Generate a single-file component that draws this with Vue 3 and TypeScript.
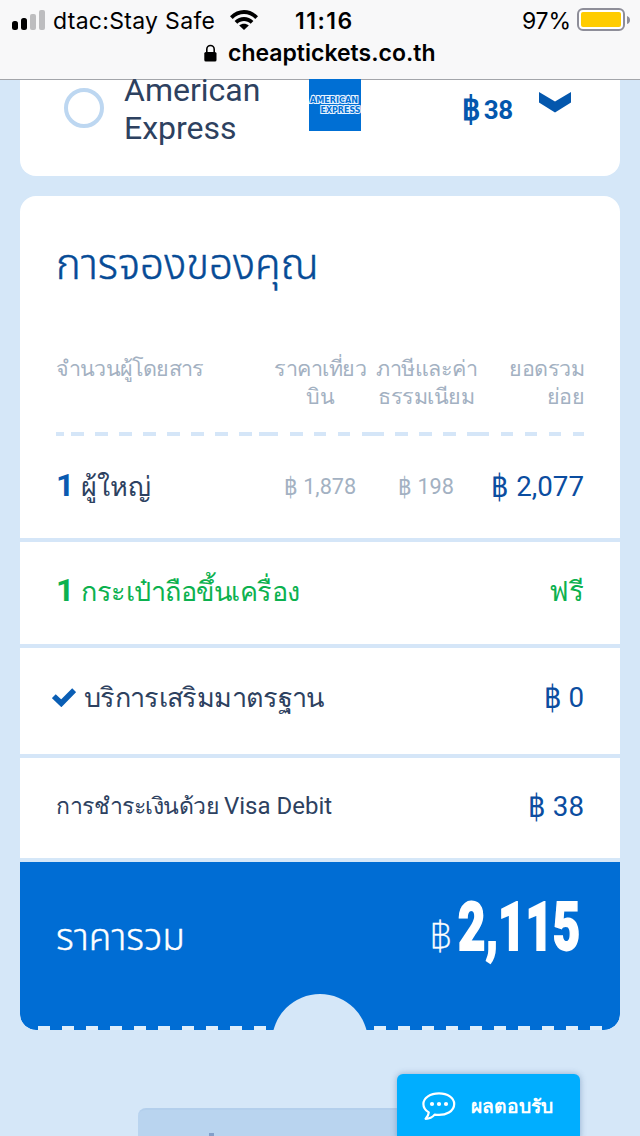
<script setup lang="ts">
interface Dash { x: number; w: number }

const headerDashes: Dash[] = [
  [56, 8], [71, 13], [95, 13], [119, 13], [143, 13], [167, 13], [191, 13], [215, 13], [239, 13],
  [259, 19], [290, 13], [314, 12], [338, 12], [362, 22], [395, 13], [419, 13], [443, 13],
  [467, 22], [501, 12], [525, 12], [549, 12], [573, 11],
].map(([x, w]) => ({ x: x - 56, w }))

const notches: number[] = [
  ...Array.from({ length: 10 }, (_, i) => 18 + i * 24),
  ...Array.from({ length: 10 }, (_, i) => 354 + i * 24),
]
</script>

<template>
  <div class="screen">
    <header class="browser">
      <div class="status">
        <svg class="signal" width="34" height="20" viewBox="0 0 34 20">
          <rect x="0" y="11" width="6" height="9" rx="2.5" />
          <rect x="9" y="8" width="6" height="12" rx="2.5" />
          <rect x="18" y="4" width="6" height="16" rx="2" fill="#bdbdbf" />
          <rect x="27" y="0" width="6" height="20" rx="2" fill="#bdbdbf" />
        </svg>
        <span class="carrier">dtac:Stay Safe</span>
        <svg class="wifi" width="28" height="20" viewBox="0 0 28 20">
          <path d="M0 6.2C8-2 20-2 28 6.2L25.3 9C19 2.4 9 2.4 2.7 9Z" />
          <path d="M4.6 11C10 5.6 18 5.6 23.4 11L20.7 13.7C17 10 11 10 7.3 13.7Z" />
          <path d="M9.2 15.6C12 13 16 13 18.8 15.6L14 20Z" />
        </svg>
        <span class="clock">11:16</span>
        <span class="percent">97%</span>
        <svg class="battery" width="54" height="24" viewBox="0 0 54 24">
          <rect x="1" y="1" width="46" height="21" rx="5" fill="#fff" stroke="#8e8e99" stroke-width="2" />
          <rect x="4" y="4" width="40" height="15" rx="2" fill="#fc0" />
          <path d="M50 8Q53 9 53 12T50 16Z" fill="#8e8e99" />
        </svg>
      </div>
      <div class="address">
        <svg class="lock" width="13" height="18" viewBox="0 0 13 18">
          <path d="M2.8 9V5.2a3.7 3.7 0 0 1 7.4 0V9" fill="none" stroke="#000" stroke-width="1.6" />
          <rect x="0.3" y="8" width="12.2" height="9.5" rx="1.6" />
        </svg>
        <span class="host">cheaptickets.co.th</span>
      </div>
    </header>

    <section class="method">
      <span class="radio"></span>
      <span class="method-name">American<br>Express</span>
      <svg class="amex" width="52" height="52" viewBox="0 0 52 52">
        <rect width="52" height="52" fill="#006fd4" />
        <g class="amex-text">
          <text x="1" y="23.6" textLength="48" lengthAdjust="spacingAndGlyphs">AMERICAN</text>
          <text x="11.5" y="34" textLength="40" lengthAdjust="spacingAndGlyphs">EXPRESS</text>
        </g>
      </svg>
      <span class="method-fee"><span class="baht">฿</span>38</span>
      <svg class="chevron" width="32" height="21" viewBox="0 0 32 21">
        <path d="M0 0L16 9.5L32 0V10.5L16 20.5L0 10.5Z" fill="#0457ad" />
      </svg>
    </section>

    <main class="booking">
      <h1 class="title"><span>การจองของคุณ</span></h1>
      <div class="grid heads">
        <span class="h-pax">จำนวนผู้โดยสาร</span>
        <span class="h-fare">ราคาเที่ยว<br>บิน</span>
        <span class="h-tax">ภาษีและค่า<br>ธรรมเนียม</span>
        <span class="h-sum">ยอดรวม<br>ย่อย</span>
      </div>
      <svg class="dashes" width="528" height="4" viewBox="0 0 528 4">
        <rect v-for="d in headerDashes" :key="d.x" :x="d.x" y="0" :width="d.w" height="4" fill="#d5e6f8" />
      </svg>
      <div class="grid fares">
        <span class="label adult"><b>1</b> <span>ผู้ใหญ่</span></span>
        <span class="muted c1"><i>฿</i> 1,878</span>
        <span class="muted c2"><i>฿</i> 198</span>
        <span class="price"><i>฿</i> 2,077</span>
      </div>
      <div class="line bag">
        <span class="label"><b>1</b> <span>กระเป๋าถือขึ้นเครื่อง</span></span>
        <span class="price">ฟรี</span>
      </div>
      <div class="line service">
        <svg class="check" width="24" height="19" viewBox="0 0 24 19">
          <path d="M1.8 8.2L9.3 15.3L22.2 2.2" fill="none" stroke="#0a5eb4" stroke-width="5.6" />
        </svg>
        <span class="label svc">บริการเสริมมาตรฐาน</span>
        <span class="price"><i>฿</i> 0</span>
      </div>
      <div class="line payment">
        <span class="label pay"><span>การชำระเงินด้วย</span> Visa Debit</span>
        <span class="price"><i>฿</i> 38</span>
      </div>
      <div class="total">
        <span class="total-label">ราคารวม</span>
        <span class="total-baht">฿</span>
        <span class="total-value"><span>2,115</span></span>
        <svg class="edge" width="600" height="36" viewBox="0 0 600 36">
          <circle cx="300" cy="48" r="48" fill="#d5e7f8" />
          <rect v-for="x in notches" :key="x" :x="x" y="32" width="12" height="4" fill="#deeefb" />
        </svg>
      </div>
    </main>

    <div class="next"><i></i></div>
    <button class="feedback">
      <svg width="34" height="29" viewBox="0 0 34 29">
        <path d="M17 1.3C8.3 1.3 1.4 5.8 1.4 12C1.4 15.4 3.4 18.4 6.8 20.4C6.6 22.8 5.5 24.9 3.6 26.8C7.5 26.8 10.4 25.3 12.6 22.6C24.5 24.3 32.2 18.9 32.2 12C32.2 5.8 25.6 1.3 17 1.3Z" fill="none" stroke="#fff" stroke-width="2.2" stroke-linejoin="round" />
        <circle cx="10" cy="12" r="2.1" fill="#fff" /><circle cx="17" cy="12" r="2.1" fill="#fff" /><circle cx="24" cy="12" r="2.1" fill="#fff" />
      </svg>
      <span>ผลตอบรับ</span>
    </button>
  </div>
</template>

<style>
body { margin: 0; background: #d5e7f8; }
</style>

<style scoped>
* { box-sizing: border-box; }
.screen { position: relative; width: 640px; height: 1136px; overflow: hidden; background: #d5e7f8; color: #2d4160; font-family: Roboto, "Noto Sans", sans-serif; }
span { white-space: nowrap; }
.browser { height: 80px; background: #f8f8f9; border-bottom: 1px solid #a3a5aa; color: #000; font-family: Inter, sans-serif; }
.status { display: flex; height: 40px; align-items: center; padding-left: 12px; font-size: 23px; }
.carrier { width: 177px; margin: 2px 0 0 7px; letter-spacing: 0.3px; }
.clock { width: 227px; margin: 2px 0 0 37px; font-weight: 600; letter-spacing: 1.5px; }
.percent { width: 55px; margin-top: 2px; letter-spacing: -0.2px; }
.address { display: flex; height: 26px; align-items: center; padding-left: 204px; font-size: 23px; font-weight: 600; }
.lock { margin-right: 11px; }
.method { display: flex; align-items: flex-start; height: 96px; padding-left: 44px; margin: 0 20px; background: #fff; border-radius: 0 0 16px 16px; }
.radio { width: 40px; height: 40px; margin-top: 8px; border: 4px solid #bdd7f1; border-radius: 50%; }
.method-name { width: 184px; margin: -9.5px 0 0 20px; font-size: 32px; line-height: 38px; letter-spacing: 0; }
.amex { margin: -1px 0 0 1px; }
.amex-text { font: 700 8.6px "DejaVu Sans", sans-serif; fill: #006fd4; stroke: #e8f4ff; stroke-width: 2.2px; paint-order: stroke; }
.method-fee { width: 76px; margin: 10px 0 0 101px; font-size: 26px; line-height: 38px; font-weight: 700; color: #0457ad; letter-spacing: -0.3px; }
.baht { display: inline-block; font-size: 29px; margin-right: 4px; transform: scaleY(1.14); transform-origin: center 60%; }
.chevron { margin: 12px 0 0 1px; }
.booking { margin: 20px 20px 0; background: #fff; border-radius: 16px; height: 834px; overflow: hidden; }
.title { margin: 0; padding: 40px 36px 0; height: 156px; font: 300 42px/60px "Noto Sans Thai", sans-serif; color: #064b96; -webkit-text-stroke: 0.5px #064b96; }
.grid { display: grid; grid-template-columns: 208px 112px 100px 108px; margin: 0 36px; }
.heads { height: 80px; font-size: 21.5px; letter-spacing: -0.5px; line-height: 28px; color: #a3b1c2; padding-top: 3px; text-align: center; }
.h-pax { text-align: left; letter-spacing: -0.8px; }
.h-sum, .price { text-align: right; }
.dashes { display: block; margin-left: 36px; }
.fares { height: 102px; align-items: center; padding-bottom: 2px; }
.muted { font-size: 21.7px; color: #a3b1c2; text-align: center; }
.label { font-size: 27px; }
.label b { font-size: 32px; color: #0a5ab0; }
.price { font-size: 27.7px; color: #0b4da0; }
.price i, .muted i { display: inline-block; font-style: normal; transform: scaleY(1.16); transform-origin: center 60%; }
.line { display: flex; align-items: center; padding: 0 36px 4px; border-top: 4px solid #d5e6f8; }
.line .price { margin-left: auto; }
.bag { height: 106px; color: #0cb14f; }
.bag .label span { letter-spacing: -0.5px; }
.bag b, .bag .price { color: #0cb14f; }
.service { height: 110px; padding: 0 36px 8px 32px; }
.svc { letter-spacing: -0.65px; }
.check { margin: 0 8px 0 0; }
.payment { height: 104px; }
.pay { font-size: 24px; }
.pay span { font-size: 23px; letter-spacing: -0.5px; }
.total { position: relative; display: flex; height: 172px; padding: 0 41px 0 36px; border-top: 4px solid #d5e7f8; background: #006dd4; background-clip: padding-box; color: #fff; align-items: flex-start; border-radius: 0 0 16px 16px; }
.total-label { font: 300 37px/50px "Noto Sans Thai", sans-serif; margin-top: 52px; -webkit-text-stroke: 0.4px #fff; }
.total-baht { margin: 51px 6px 0 auto; font: 200 40px/50px "Noto Sans Thai", sans-serif; -webkit-text-stroke: 0.3px #fff; }
.total-value { width: 121px; margin-top: 25px; font-size: 67px; font-weight: 900; line-height: 80px; }
.total-value span { display: inline-block; transform-origin: left center; transform: scaleX(.705); -webkit-text-stroke: 1.8px #fff; }
.edge { position: absolute; left: 0; bottom: 0; }
.next { position: absolute; left: 138px; top: 1108px; width: 360px; height: 40px; border-radius: 8px; background: #b9d4ef; border-top: 2px solid #b3cfec; }
.next i { position: absolute; left: 71px; top: 23px; width: 5px; height: 8px; background: #829fc9; }
.feedback { position: absolute; left: 397px; top: 1074px; width: 183px; height: 68px; display: flex; align-items: center; gap: 15px; padding: 0 0 4px 25px; border: 0; border-radius: 6px; background: #00aeff; box-shadow: 0 0 6px rgba(60, 100, 150, .45); color: #fff; font: 700 19.3px Roboto, "Noto Sans", sans-serif; }
</style>
